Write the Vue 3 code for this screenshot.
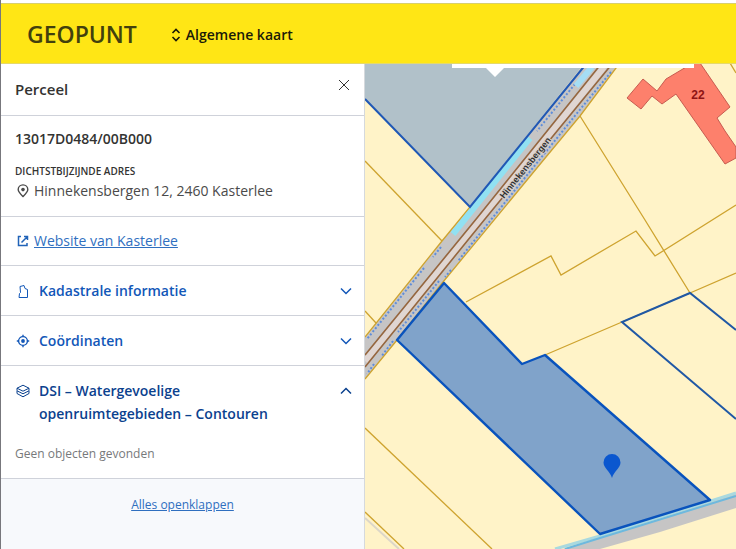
<script setup>
import { ref } from 'vue'

const sections = ref([
  { id: 'kadaster', icon: 'parcel', title: 'Kadastrale informatie', open: false },
  { id: 'coord', icon: 'target', title: 'Coördinaten', open: false },
  {
    id: 'dsi',
    icon: 'layers',
    title: 'DSI – Watergevoelige openruimtegebieden – Contouren',
    open: true,
    body: 'Geen objecten gevonden',
  },
])

function openAll() {
  sections.value.forEach((s) => (s.open = true))
}
</script>

<template>
  <div class="page">
    <div class="strip"></div>
    <header class="header">
      <a class="brand" href="#">GEOPUNT</a>
      <button class="switcher" type="button">
        <svg class="switch-icon" viewBox="0 0 10 14" aria-hidden="true">
          <path d="M1.500 5 5 1.500 8.500 5M1.500 9 5 12.500 8.500 9" />
        </svg>
        Algemene kaart
      </button>
    </header>

    <main class="main">
      <aside class="panel">
        <div class="panel-head">
          <h1>Perceel</h1>
          <button class="close" type="button" aria-label="Sluiten">
            <svg viewBox="0 0 12 12" aria-hidden="true"><path d="M1 1 11 11M11 1 1 11" /></svg>
          </button>
        </div>

        <section class="parcel">
          <h2>13017D0484/00B000</h2>
          <h3>Dichtstbijzijnde adres</h3>
          <p class="address">
            <svg class="pin-icon" viewBox="0 0 12 14" aria-hidden="true">
              <path d="M6 12.500C3.400 10 1.200 8 1.200 5.600A4.800 4.700 0 0 1 10.800 5.600C10.800 8 8.600 10 6 12.500Z" />
              <circle cx="6" cy="5.600" r="1.800" />
            </svg>
            Hinnekensbergen 12, 2460 Kasterlee
          </p>
        </section>

        <section class="website">
          <svg class="ext-icon" viewBox="0 0 12 12" aria-hidden="true">
            <path d="M4 1.500H1.500V10.500H10V8M7 1.500H10.500V5M10.500 1.500 4.500 7.500" />
          </svg>
          <a href="#">Website van Kasterlee</a>
        </section>

        <section v-for="s in sections" :key="s.id" class="accordion">
          <button
            class="toggle"
            :class="{ open: s.open }"
            type="button"
            :aria-expanded="s.open"
            @click="s.open = !s.open"
          >
            <svg v-if="s.icon === 'parcel'" class="row-icon thin" viewBox="0 0 14 14" aria-hidden="true">
              <path d="M4 2.500 8 1.500 9 4.500 11.500 5.500V13.500H3L3.500 9.500 4.500 8.500Z" />
            </svg>
            <svg v-else-if="s.icon === 'target'" class="row-icon" viewBox="0 0 14 14" aria-hidden="true">
              <circle cx="7" cy="7" r="4.400" />
              <circle class="dot" cx="7" cy="7" r="1.900" />
              <path d="M7 .8V2.600M7 11.400V13.200M.8 7H2.600M11.400 7H13.200" />
            </svg>
            <svg v-else class="row-icon thin" viewBox="0 0 14 14" aria-hidden="true">
              <path d="M7 1.200 13 4.200 7 7.200 1 4.200ZM1 4.200V6.800L7 9.800 13 6.800V4.200M1 7V9.500L7 12.800 13 9.500V7" />
            </svg>
            <span class="toggle-text">{{ s.title }}</span>
            <svg class="chevron" viewBox="0 0 12 8" aria-hidden="true"><path d="M1 1.500 6 6.500 11 1.500" /></svg>
          </button>
          <p v-if="s.open && s.body" class="body">{{ s.body }}</p>
        </section>

        <footer class="panel-foot">
          <button class="link-button" type="button" @click="openAll">Alles openklappen</button>
        </footer>
      </aside>

      <div class="map">
        <svg class="map-svg" viewBox="365 64 371 485" preserveAspectRatio="xMinYMin slice" role="img" aria-label="Kaart">
          <rect x="365" y="64" width="2000" height="2000" fill="#fff3c8" />

          <g class="boundary">
            <path d="M365 161 442 241" />
            <path d="M365 311 376 323" />
            <path d="M580 116 645 220 690 293 736 273" />
            <path d="M466 302 551 256 561 275 636 231 655 256 736 205" />
            <path d="M545 355 622 322 690 293" />
            <path d="M730 63 736 73" />
            <path d="M365 428 492 549" />
            <path d="M365 512 404 549" />
          </g>
          <path d="M365 518 399 549" stroke="#dcd6c8" stroke-width="2" fill="none" />

          <path d="M584 64H619L580 116 546 157 443 282 397 340 365 379V337L442 241 470 207Z" fill="#c6c5c5" />
          <path class="boundary" d="M619 64 580 116 546 157 443 282 397 340 365 379M365 337 442 241 470 207" />
          <path d="M604 67 481 219 365 361" stroke="#e0d6d2" stroke-width="6" fill="none" />
          <path d="M601 64 477 218 365 355M612 64 485 219 365 367" stroke="#96663e" stroke-width="1.600" fill="none" />
          <path
            d="M611 72 578 112 490 221 458 261M441 247 433 257M424 268 367 339M451 270 445 277M439 281 398 332M393 341 381 357M374 364 367 374M575 84 537 131"
            stroke="#5e8dda"
            stroke-width="2"
            stroke-dasharray="2 2"
            fill="none"
          />
          <path d="M592 67 576 86" stroke="#a5ddf4" stroke-width="6" fill="none" />
          <path d="M530 138 453 234" stroke="#91e1f2" stroke-width="6" fill="none" />

          <path d="M365 64H584L470 207 365 99Z" fill="#b1c1c9" />
          <path d="M365 99 470 207 586 64" stroke="#2058b5" stroke-width="2" fill="none" />

          <path
            d="M643 79 657 91 666 79 698 60 730 107 717 118 725 131 736 147V158L725 164 676 94 662 104 652 96 641 109 627 98Z"
            fill="#fd806c"
            stroke="#c75b50"
            stroke-width="1"
          />
          <text class="house" x="698" y="99">22</text>
          <text class="street-label" transform="translate(504 199) rotate(-51)">Hinnekensbergen</text>

          <path d="M563 549 600 538 710 502 736 494V508L660 532 600 549Z" fill="#c6c5c5" />
          <path d="M555 549 600 536 736 493" stroke="#a9d9df" stroke-width="3" fill="none" />
          <path d="M565 549 600 538 736 496" stroke="#6db9de" stroke-width="2" fill="none" />

          <path d="M736 330 690 293 622 322 736 419" stroke="#2058a5" stroke-width="2" fill="none" />
          <path
            d="M444 283 522 364 545 355 710 500 600 534 397 340Z"
            fill="#80a3ca"
            stroke="#0953bd"
            stroke-width="2.400"
            stroke-linejoin="round"
          />
          <path d="M612 478C610 471 603.500 468 603.500 462.500A8.500 8.500 0 0 1 620.500 462.500C620.500 468 614 471 612 478Z" fill="#0b57cf" />
          <path d="M452 64H694V68H504L495 77 486 68H452Z" fill="#fff" />
        </svg>
      </div>
    </main>
  </div>
</template>

<style>
body {
  margin: 0;
}
</style>

<style scoped>
.page {
  display: flex;
  flex-direction: column;
  min-height: 100vh;
  box-sizing: border-box;
  border-left: 1px solid #77777c;
  background: #fff;
  color: #333332;
  font-family: "Open Sans", "Noto Sans", sans-serif;
  font-size: 14px;
  line-height: 20px;
}
h1,
h2,
h3,
p {
  margin: 0;
}
button {
  border: 0;
  padding: 0;
  background: none;
  font: inherit;
  color: inherit;
  cursor: pointer;
}
svg {
  display: block;
  flex: none;
  fill: none;
  stroke: currentColor;
}
.strip {
  height: 3px;
}
.header {
  display: flex;
  align-items: center;
  gap: 34px;
  height: 59px;
  padding: 0 26px;
  border-top: 1px solid #d8cf6c;
  border-bottom: 1px solid #e5d96a;
  background: #ffe615;
}
.brand {
  color: #42400d;
  font-size: 23px;
  font-weight: 600;
  line-height: 32px;
  text-decoration: none;
}
.switcher {
  display: flex;
  align-items: center;
  gap: 5px;
  padding-top: 2px;
  color: #1a1a08;
  font-weight: 600;
}
.switch-icon {
  width: 10px;
  height: 14px;
  stroke-width: 1.6;
}
.main {
  display: grid;
  grid-template-columns: minmax(0, 364px) minmax(0, 1fr);
  flex: 1;
}
.panel {
  display: flex;
  flex-direction: column;
  border-right: 1px solid #d5d9dd;
}
.map {
  position: relative;
  overflow: hidden;
}
.panel-head,
.parcel,
.website,
.accordion {
  border-bottom: 1px solid #cfd2da;
}
.panel-head {
  display: flex;
  justify-content: space-between;
  padding: 15px 14px 16px;
}
h1 {
  font-size: 15px;
  font-weight: 600;
}
.close {
  width: 12px;
  height: 12px;
}
.close svg {
  width: 12px;
  height: 12px;
}
.parcel {
  padding: 13px 14px 15px;
}
h2 {
  font-size: 14px;
  font-weight: 600;
}
h3 {
  padding-top: 12px;
  font-size: 10px;
  font-weight: 600;
  text-transform: uppercase;
}
.address {
  display: flex;
  align-items: center;
  gap: 5px;
  padding-left: 2px;
  color: #4a4a4a;
}
.pin-icon {
  width: 12px;
  height: 14px;
  stroke-width: 1.4;
}
.pin-icon circle {
  fill: currentColor;
  stroke: none;
}
.website {
  display: flex;
  align-items: center;
  gap: 5px;
  padding: 14px 16px;
  color: #2163b8;
}
.ext-icon {
  width: 12px;
  height: 12px;
  stroke-width: 1.5;
}
.website a,
.link-button {
  color: #2f6fbf;
  text-decoration: underline;
}
.toggle {
  display: flex;
  align-items: flex-start;
  width: 100%;
  padding: 13px 12px 13px 15px;
  color: #1257b8;
  font-weight: 600;
  line-height: 23px;
  text-align: left;
}
.toggle.open {
  color: #0b418e;
}
.row-icon {
  width: 14px;
  height: 14px;
  margin-top: 5px;
  margin-right: 9px;
  stroke-width: 1.4;
}
.thin {
  stroke-width: 1;
}
.dot {
  fill: currentColor;
  stroke: none;
}
.toggle-text {
  flex: 1;
  padding-right: 64px;
}
.chevron {
  width: 12px;
  height: 8px;
  margin-top: 8px;
  stroke-width: 1.5;
}
.open .chevron {
  transform: rotate(180deg);
}
.body {
  padding: 6px 14px 14px;
  color: #77797b;
  font-size: 12px;
}
.panel-foot {
  flex: 1;
  padding-top: 15px;
  background: #f7f9fc;
  text-align: center;
}
.link-button {
  font-size: 12px;
}
.map-svg {
  position: absolute;
  inset: 0;
  width: 100%;
  height: 100%;
  stroke: none;
}
.boundary {
  fill: none;
  stroke: #cea32f;
  stroke-width: 1.3;
}
.house {
  fill: #8e1414;
  font: 700 12px "Liberation Sans", sans-serif;
  text-anchor: middle;
}
.street-label {
  fill: #333;
  stroke: #d6d0cc;
  stroke-width: 2;
  paint-order: stroke;
  font: 700 9px "Liberation Sans", sans-serif;
}
</style>
